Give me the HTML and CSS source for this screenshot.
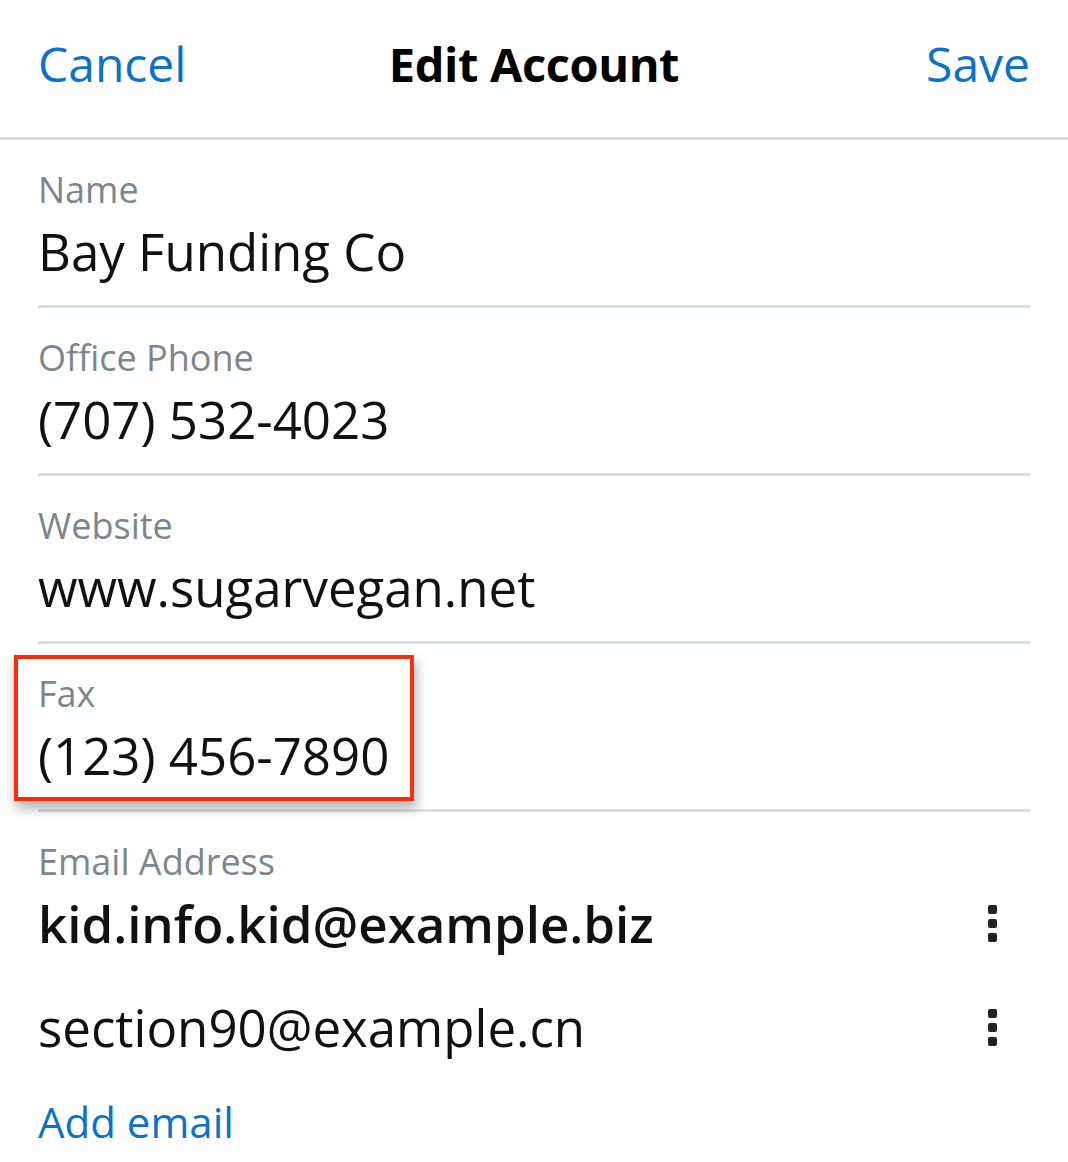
FILE: index.html
```html
<!DOCTYPE html>
<html>
<head>
<meta charset="utf-8">
<link rel="stylesheet" href="styles.css">
</head>
<body>
<div class="screen">
  <header class="topbar">
    <span class="action left">Cancel</span>
    <span class="title">Edit Account</span>
    <span class="action right">Save</span>
  </header>
  <main class="form">
    <div class="field">
      <div class="label">Name</div>
      <div class="value">Bay Funding Co</div>
    </div>
    <div class="field">
      <div class="label">Office Phone</div>
      <div class="value">(707) 532-4023</div>
    </div>
    <div class="field">
      <div class="label">Website</div>
      <div class="value">www.sugarvegan.net</div>
    </div>
    <div class="field">
      <div class="label">Fax</div>
      <div class="value">(123) 456-7890</div>
      <div class="highlight"></div>
    </div>
    <div class="field emails">
      <div class="label">Email Address</div>
      <div class="email-list">
        <div class="email-row">
          <span class="email primary">kid.info.kid@example.biz</span>
          <span class="kebab"><i></i><i></i><i></i></span>
        </div>
        <div class="email-row">
          <span class="email">section90@example.cn</span>
          <span class="kebab"><i></i><i></i><i></i></span>
        </div>
      </div>
      <div class="add">Add email</div>
    </div>
  </main>
</div>
</body>
</html>
```
FILE: styles.css
```css
* { box-sizing: border-box; }
html, body { margin: 0; padding: 0; background: #fff; }
body { font-family: "Open Sans", "Noto Sans", sans-serif; color: #111; }
.screen { width: 1068px; height: 1162px; overflow: hidden; }
.topbar {
  height: 140px;
  padding: 0 38px 10px;
  display: grid;
  grid-template-columns: 1fr auto 1fr;
  align-items: center;
  border-bottom: 3px solid #d8dee4;
}
.action { font-size: 48px; color: #0b72c8; }
.action.left { justify-self: start; }
.action.right { justify-self: end; }
.title { font-size: 47px; font-weight: 700; color: #000; letter-spacing: -0.4px; }
.form { padding: 0 38px; }
.field {
  position: relative;
  padding: 30px 0 22px;
  border-bottom: 3px solid #d8dee4;
}
.label { font-size: 36px; line-height: 40px; color: #7c868d; }
.value { font-size: 51px; line-height: 64px; margin-top: 9px; color: #111; }
.highlight {
  position: absolute;
  left: -24px;
  top: 11px;
  width: 400px;
  height: 146px;
  border: 4px solid #ff2c0c;
  box-shadow: 2px 7px 12px rgba(0,0,0,0.32);
}
.emails { border-bottom: none; }
.email-list { margin-top: -11px; }
.email-row {
  display: flex;
  align-items: center;
  justify-content: space-between;
  height: 104px;
}
.email { font-size: 51px; color: #111; }
.email.primary { font-weight: 600; }
.kebab { display: flex; flex-direction: column; gap: 5px; margin-right: 33px; }
.kebab i { display: block; width: 9px; height: 9px; border-radius: 2px; background: #222; }
.add { font-size: 42px; line-height: 56px; margin-top: 15px; color: #0b72c8; }
```
